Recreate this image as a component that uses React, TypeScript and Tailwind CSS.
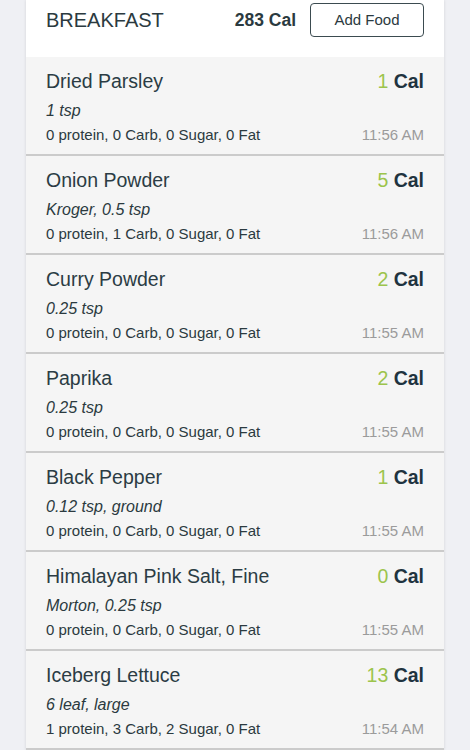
const foods = [
  { name: "Dried Parsley", serving: "1 tsp", cal: 1, macros: "0 protein, 0 Carb, 0 Sugar, 0 Fat", time: "11:56 AM" },
  { name: "Onion Powder", serving: "Kroger, 0.5 tsp", cal: 5, macros: "0 protein, 1 Carb, 0 Sugar, 0 Fat", time: "11:56 AM" },
  { name: "Curry Powder", serving: "0.25 tsp", cal: 2, macros: "0 protein, 0 Carb, 0 Sugar, 0 Fat", time: "11:55 AM" },
  { name: "Paprika", serving: "0.25 tsp", cal: 2, macros: "0 protein, 0 Carb, 0 Sugar, 0 Fat", time: "11:55 AM" },
  { name: "Black Pepper", serving: "0.12 tsp, ground", cal: 1, macros: "0 protein, 0 Carb, 0 Sugar, 0 Fat", time: "11:55 AM" },
  { name: "Himalayan Pink Salt, Fine", serving: "Morton, 0.25 tsp", cal: 0, macros: "0 protein, 0 Carb, 0 Sugar, 0 Fat", time: "11:55 AM" },
  { name: "Iceberg Lettuce", serving: "6 leaf, large", cal: 13, macros: "1 protein, 3 Carb, 2 Sugar, 0 Fat", time: "11:54 AM" },
];

export default function App() {
  return (
    <div
      className="min-h-[750px] w-[470px] overflow-hidden bg-[#eff0f4] px-[26px]"
      style={{ fontFamily: '"Liberation Sans", Arial, sans-serif' }}
    >
      <div className="bg-[#f5f5f5] shadow-[0_0_3px_rgba(0,0,0,0.12)]">
        <div className="flex h-[57px] items-start bg-white pl-5 pr-5 pt-[3px]">
          <div className="flex h-[34px] flex-1 items-center text-[20px] text-[#2b3a40]">BREAKFAST</div>
          <div className="flex h-[34px] items-center text-[17.5px] font-bold text-[#2b3a40]">283 Cal</div>
          <button className="ml-[14px] flex h-[34px] w-[114px] items-center justify-center rounded-[4px] border border-[#3b4b50] bg-white text-[15px] text-[#2b3a40]">
            Add Food
          </button>
        </div>
        {foods.map((f) => (
          <div key={f.name} className="border-b-2 border-[#cbcbcb] px-5 pb-[9px] pt-[13px]">
            <div className="flex h-6 items-center justify-between">
              <span className="text-[19.5px] text-[#2b3c44]">{f.name}</span>
              <span className="text-[19.5px] font-bold text-[#1f3340]">
                <span className="font-normal text-[#9cc44c]">{f.cal}</span> Cal
              </span>
            </div>
            <div className="mt-[6px] flex h-[22px] items-center text-[16px] italic text-[#2b3a40]">{f.serving}</div>
            <div className="mt-[3px] flex h-5 items-center justify-between">
              <span className="text-[15px] text-[#2b3a40]">{f.macros}</span>
              <span className="text-[15px] text-[#9b9b9b]">{f.time}</span>
            </div>
          </div>
        ))}
      </div>
    </div>
  );
}
